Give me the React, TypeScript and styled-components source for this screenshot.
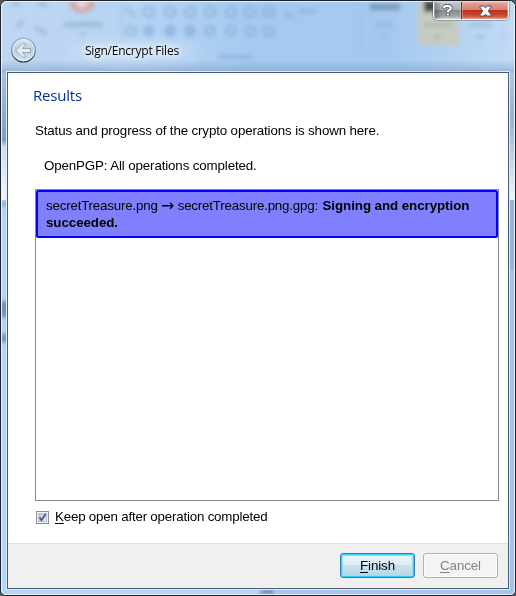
import React from 'react';
import styled, { createGlobalStyle, css } from 'styled-components';

const GlobalStyle = createGlobalStyle`
  * { box-sizing: border-box; }
  html, body { margin: 0; padding: 0; overflow: hidden; }
  body { background: #55575c; font: 13.33px/16px "Liberation Sans", Arial, sans-serif; color: #000; }
`;

const Window = styled.div`
  position: relative;
  isolation: isolate;
  width: 516px;
  height: 596px;
  border: 1px solid #1d222d;
  border-radius: 7px 7px 6px 6px;
  overflow: hidden;
  background: #b2d3f8;
  display: flex;
  flex-direction: column;
  padding: 0 6px 6px;
`;

const Glass = styled.svg`
  position: absolute;
  inset: -1px;
  z-index: -1;
`;

const GlassEdge = styled.div`
  position: absolute;
  inset: 0;
  border: 1px solid rgba(238, 247, 255, 0.9);
  border-radius: 6px 6px 5px 5px;
  pointer-events: none;
`;

const TitleBar = styled.header`
  height: 71px;
  flex: none;
  display: flex;
  align-items: flex-start;
  padding: 36px 0 0 4px;
`;

const BackButton = styled.button`
  width: 26px;
  height: 26px;
  padding: 0;
  border: 0;
  background: none;
  svg { display: block; }
`;

const Title = styled.h1`
  margin: 5px 0 0 48px;
  font: 12px/18px "Open Sans", "Noto Sans", sans-serif;
  letter-spacing: -0.23px;
  white-space: nowrap;
  text-shadow: 0 0 5px #fff, 0 0 8px #fff, 0 0 11px rgba(255, 255, 255, 0.8);
`;

const CaptionButtons = styled.div`
  position: absolute;
  top: 0;
  right: 6px;
  display: flex;
  width: 76px;
  height: 19px;
  border: 1px solid #eef5fc;
  border-top-color: #d5dbe3;
  border-radius: 0 0 5px 5px;
  box-shadow: 0 0 0 1px rgba(60, 70, 90, 0.35);
  overflow: hidden;
`;

const CaptionButton = styled.button<{ $close?: boolean }>`
  padding: 0;
  border: 0;
  flex: ${p => (p.$close ? '1' : '0 0 27px')};
  display: flex;
  align-items: center;
  justify-content: center;
  ${p => p.$close
    ? css`
        border-left: 1px solid #6a2925;
        background: linear-gradient(#e6a69b 0, #d77d6e 48%, #bd3320 50%, #c7452d 75%, #df8262);
        box-shadow: inset 0 0 0 1px rgba(255, 190, 175, 0.45);
      `
    : css`
        background: linear-gradient(90deg, rgba(50, 55, 60, 0.45), rgba(255, 255, 255, 0) 30%),
          linear-gradient(#c1c5c8 0, #aaaeb1 48%, #83898b 50%, #9da2a0 80%, #c1c5c2);
        box-shadow: inset 0 0 0 1px rgba(225, 230, 235, 0.4);
      `}
`;

const Client = styled.main`
  flex: 1;
  min-height: 0;
  display: flex;
  flex-direction: column;
  background: #fff;
  border: 1px solid #4b5a6e;
  box-shadow: 0 0 0 1px #dcecfc;
`;

const Page = styled.section`
  flex: 1;
  min-height: 0;
  display: flex;
  flex-direction: column;
  padding: 13px 9px 0 27px;
`;

const Heading = styled.h2`
  margin: 0 0 0 -2px;
  height: 18px;
  font: 15px/18px "Open Sans", "Noto Sans", sans-serif;
  letter-spacing: -0.2px;
  color: #003399;
`;

const Description = styled.p`
  margin: 19px 0 0;
  letter-spacing: -0.13px;
  white-space: nowrap;
`;

const Status = styled.p`
  margin: 19px 0 0 9px;
  letter-spacing: -0.13px;
`;

const ResultList = styled.div`
  margin-top: 15px;
  height: 312px;
  flex: none;
  border: 1px solid #828790;
`;

const ResultItem = styled.div`
  height: 48px;
  padding: 5px 8px 0;
  border: 2px solid #0000ff;
  border-radius: 2px;
  background: #8080ff;
  line-height: 17px;
  letter-spacing: -0.19px;
`;

const ArrowSign = styled.span`
  display: inline-block;
  width: 20px;
  height: 17px;
  vertical-align: top;
  text-align: center;
  font: 16px/17px "DejaVu Sans", sans-serif;
  letter-spacing: 0;
`;

const Outcome = styled.strong`
  margin-left: 1px;
  letter-spacing: -0.06px;
`;

const Option = styled.label`
  margin-top: 8px;
  display: flex;
  align-items: center;
  gap: 6px;
  padding-left: 1px;
  letter-spacing: -0.2px;
`;

const CheckBox = styled.span`
  width: 13px;
  height: 13px;
  flex: none;
  border: 1px solid #8e8f8f;
  background: linear-gradient(135deg, #b9bfc8, #f3f4f6);
  box-shadow: inset 0 0 0 1px #f4f4f4, inset 0 0 0 2px #bdc3cc;
  svg { display: block; }
`;

const Mnemonic = styled.span`
  text-decoration: underline;
  text-decoration-thickness: 1px;
  text-underline-offset: 2px;
`;

const Footer = styled.footer`
  flex: none;
  height: 45px;
  border-top: 1px solid #dfdfdf;
  background: #f0f0f0;
  display: flex;
  justify-content: flex-end;
  gap: 8px;
  padding: 9px 10px 0;
`;

const PushButton = styled.button<{ $primary?: boolean }>`
  width: 75px;
  height: 25px;
  padding: 0;
  font: 13.33px/16px "Liberation Sans", Arial, sans-serif;
  letter-spacing: -0.1px;
  border-radius: 3px;
  ${p => p.$primary
    ? css`
        color: #000;
        border: 1px solid #3b7fb0;
        background: linear-gradient(#edf6fb 0, #dcecf4 48%, #c9e1ed 50%, #b5d6e6);
        box-shadow: inset 0 0 0 1px #30cdf8, inset 0 0 0 2px #8ce3fa;
      `
    : css`
        color: #838383;
        border: 1px solid #adb2b5;
        background: #f4f4f4;
        box-shadow: inset 0 0 0 1px #fbfbfb;
      `}
`;

const BlurredDesktop = () => (
  <Glass width="516" height="596" viewBox="0 0 516 596">
    <defs>
      <linearGradient id="sky" x1="0" y1="0" x2="1" y2="0">
        <stop offset="0" stopColor="#bfd7f1" />
        <stop offset=".3" stopColor="#b4d2f3" />
        <stop offset=".5" stopColor="#a5c9f0" />
        <stop offset=".75" stopColor="#a4c8ef" />
        <stop offset="1" stopColor="#c3dbf4" />
      </linearGradient>
      <linearGradient id="left" x1="0" y1="0" x2="0" y2="1">
        <stop offset="0" stopColor="#a5c2e3" />
        <stop offset=".53" stopColor="#7f9ec5" />
        <stop offset=".58" stopColor="#c8dcf3" />
        <stop offset="1" stopColor="#f1f6fc" />
      </linearGradient>
      <linearGradient id="right" x1="0" y1="0" x2="0" y2="1">
        <stop offset="0" stopColor="#adc9e7" />
        <stop offset=".35" stopColor="#94b3d7" />
        <stop offset="1" stopColor="#f1f5fa" />
      </linearGradient>
      <linearGradient id="shade" x1="0" y1="0" x2="0" y2="1">
        <stop offset="0" stopColor="#7b9cc4" stopOpacity="0" />
        <stop offset="1" stopColor="#7b9cc4" stopOpacity=".6" />
      </linearGradient>
      <filter id="soft" x="-30%" y="-30%" width="160%" height="160%"><feGaussianBlur stdDeviation="2" /></filter>
      <filter id="wide" x="-50%" y="-50%" width="200%" height="200%"><feGaussianBlur stdDeviation="7" /></filter>
    </defs>
    <rect width="516" height="596" fill="#b4d5fb" />
    <rect width="516" height="73" fill="url(#sky)" />
    <rect y="60" width="516" height="13" fill="url(#shade)" />
    <g filter="url(#soft)">
      <ellipse cx="82" cy="4" rx="12" ry="9" fill="#cfa9a5" />
      <ellipse cx="82" cy="3" rx="6" ry="5" fill="#e4d5df" />
      <rect x="64" y="22" width="39" height="5" fill="#93add0" opacity=".65" />
      <path d="M80 34h5" stroke="#7f9bc0" strokeWidth="3" opacity=".4" />
      <path d="M16 26l8-4M35 27l12 7M12 4h8M38 3l9 3" stroke="#7199c0" strokeWidth="4" opacity=".4" />
      <g fill="none" stroke="#76a5d0" strokeWidth="2.5" opacity=".65">
        <path d="M126 7l9 10" />
        {[149, 170, 190, 210, 231, 250, 269].map(x => <circle key={x} cx={x} cy="12" r="5" />)}
        {[131, 149, 170, 190, 210, 231, 250, 269].map(x => <circle key={x} cx={x} cy="31" r="4.5" />)}
      </g>
      <path d="M149 27v9M170 26v10M190 26v10" stroke="#729dc9" strokeWidth="4" opacity=".45" />
      <path d="M218 57h34M284 13l10 4M300 11h15" stroke="#7197c1" strokeWidth="4" opacity=".4" />
      <path d="M122 4v40M360 5v48M503 26v18" stroke="#91b4db" strokeWidth="2" opacity=".4" />
      <path d="M370 7h30" stroke="#68819c" strokeWidth="6" opacity=".65" />
      <path d="M375 25h18M382 36h5M470 25h22M477 37h7" stroke="#7e9fc4" strokeWidth="4" opacity=".4" />
      <rect x="418" y="-4" width="41" height="49" fill="#c9cbb8" opacity=".85" />
      <rect x="424" y="0" width="13" height="12" fill="#464a4e" />
      <path d="M424 25h28M434 37h6" stroke="#a5aaa0" strokeWidth="4" opacity=".6" />
    </g>
    <ellipse cx="132" cy="52" rx="70" ry="12" fill="#dcecfb" opacity=".35" filter="url(#wide)" />
    <rect x="1" y="73" width="7" height="127" fill="url(#left)" />
    <rect x="508" y="73" width="7" height="127" fill="url(#right)" />
    <rect x="508" y="200" width="7" height="70" fill="#93b7df" />
    <rect x="508" y="270" width="7" height="325" fill="#a0c4ee" />
    <g filter="url(#soft)" fill="#6e8cb5">
      <rect x="0" y="202" width="8" height="4" opacity=".7" />
      <rect x="0" y="301" width="8" height="16" />
      <rect x="0" y="334" width="8" height="8" />
      <rect x="261" y="589" width="13" height="6" />
    </g>
    <rect x="275" y="590" width="238" height="5" fill="#a0c4ee" opacity=".8" />
  </Glass>
);

const BackArrow = () => (
  <svg width="26" height="26" viewBox="0 0 26 26">
    <defs>
      <linearGradient id="orb" x1="0" y1="0" x2="0" y2="1">
        <stop offset="0" stopColor="#dce8f2" />
        <stop offset=".5" stopColor="#b9cddd" />
        <stop offset="1" stopColor="#d8e9f5" />
      </linearGradient>
      <linearGradient id="rim" x1="0" y1="0" x2="0" y2="1">
        <stop offset="0" stopColor="#8eabc7" />
        <stop offset=".6" stopColor="#6c829b" />
        <stop offset="1" stopColor="#2d394b" />
      </linearGradient>
    </defs>
    <circle cx="12.5" cy="13.2" r="11.8" fill="url(#orb)" stroke="url(#rim)" strokeWidth="1.2" />
    <circle cx="12.5" cy="13" r="10.7" fill="none" stroke="#edf5fb" strokeWidth=".9" opacity=".85" />
    <path d="M4.7 13.5 11.4 6.8h3.2v1.1l-3.3 3.6h8.2v4h-8.2l3.3 3.6v1.1h-3.2z" fill="#e5edf3" stroke="#9ba8b3" strokeWidth="1" strokeLinejoin="round" />
  </svg>
);

const CloseGlyph = () => (
  <svg width="13" height="12" viewBox="0 0 13 12">
    <path d="M1 1h3.9l1.6 1.9L8.1 1H12v1.3L9.3 6l2.7 3.7V11H8.1L6.5 9.1 4.9 11H1V9.7L3.7 6 1 2.3z" fill="#fff" stroke="#4c4e63" strokeWidth="1" strokeLinejoin="round" />
  </svg>
);

const HelpGlyph = () => (
  <svg width="11" height="13" viewBox="0 0 11 13" fill="none">
    <path d="M2 4.5C2.1.9 9 .9 8.8 4.2c-.1 1.8-3 1.9-3 4M5.8 9.2v2.8" stroke="#4c4e63" strokeWidth="3.8" />
    <path d="M2 4C2.1 1.1 9 1.1 8.8 4.2c-.1 1.8-3 1.9-3 3.8M5.8 9.5v2" stroke="#fff" strokeWidth="2.2" />
  </svg>
);

export default function App() {
  return (
    <>
      <GlobalStyle />
      <Window>
        <BlurredDesktop />
        <GlassEdge />
        <TitleBar>
          <BackButton aria-label="Back"><BackArrow /></BackButton>
          <Title>Sign/Encrypt Files</Title>
          <CaptionButtons>
            <CaptionButton aria-label="Help"><HelpGlyph /></CaptionButton>
            <CaptionButton $close aria-label="Close"><CloseGlyph /></CaptionButton>
          </CaptionButtons>
        </TitleBar>
        <Client>
          <Page>
            <Heading>Results</Heading>
            <Description>Status and progress of the crypto operations is shown here.</Description>
            <Status>OpenPGP: All operations completed.</Status>
            <ResultList>
              <ResultItem>
                secretTreasure.png<ArrowSign>→</ArrowSign>secretTreasure.png.gpg: <Outcome>Signing and encryption<br />succeeded.</Outcome>
              </ResultItem>
            </ResultList>
            <Option>
              <CheckBox>
                <svg width="11" height="11" viewBox="0 0 11 11">
                  <path d="M2.5 5.2 4.5 8.2 8.6 2" fill="none" stroke="#4159a0" strokeWidth="1.8" />
                </svg>
              </CheckBox>
              <span><Mnemonic>K</Mnemonic>eep open after operation completed</span>
            </Option>
          </Page>
          <Footer>
            <PushButton $primary><Mnemonic>F</Mnemonic>inish</PushButton>
            <PushButton disabled><Mnemonic>C</Mnemonic>ancel</PushButton>
          </Footer>
        </Client>
      </Window>
    </>
  );
}
